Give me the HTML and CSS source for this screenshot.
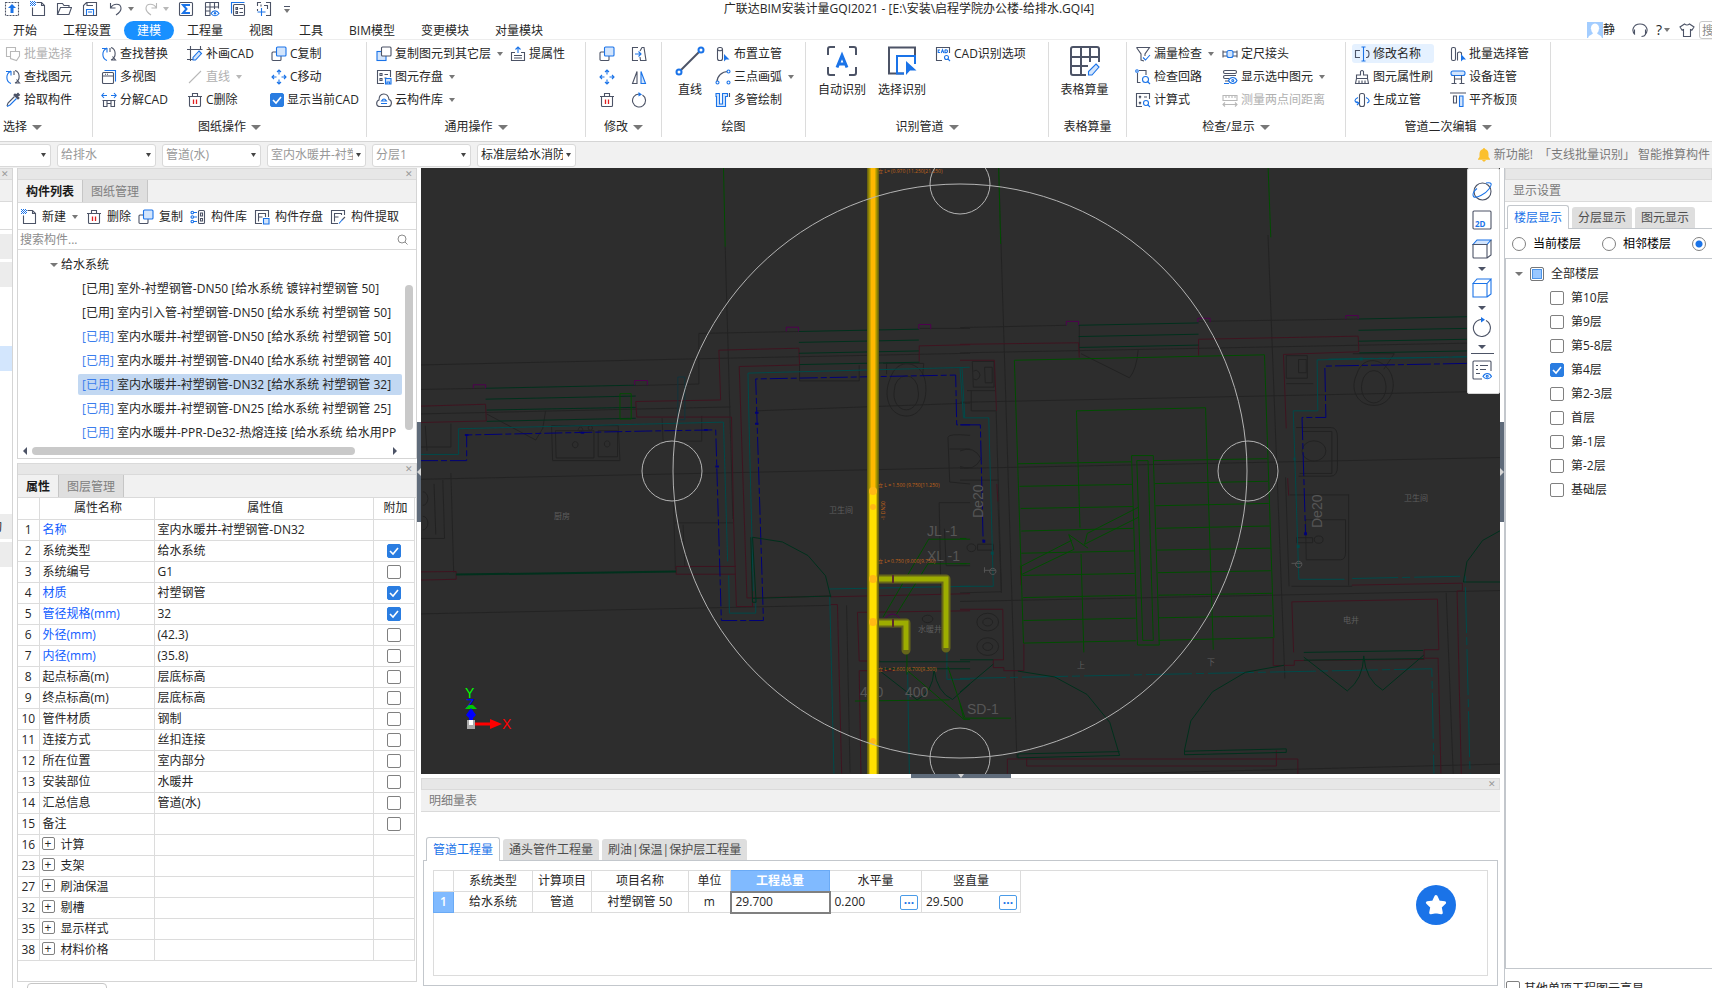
FILE: index.html
```html
<!DOCTYPE html>
<html lang="zh-CN">
<head>
  <meta charset="UTF-8" />
  <meta name="viewport" content="width=device-width, initial-scale=1.0"/>
  <title>广联达BIM安装计量GQI2021</title>
  <link rel="stylesheet" href="styles.css">
</head>
<body>
  <!-- Icon sprite: k = dark line, b = blue line, f = light blue fill -->
  <svg class="sprite" aria-hidden="true">
    <symbol id="i-top" viewBox="0 0 16 16"><path class="k" stroke-dasharray="2 1" d="M1.5 1.5h13v13h-13z"/><path class="bf" d="M8 3l4 4H9.5v5h-3V7H4z"/></symbol>
    <symbol id="i-new" viewBox="0 0 16 16"><path class="k" d="M6.500 1.500h5l3 3v10h-12v-8M11.500 1.500v3h3"/><path class="b" stroke-dasharray="1 1" d="M0 .5h5M1 1.500h5M0 2.500h5M1 3.500h5M0 4.500h5"/></symbol>
    <symbol id="i-open" viewBox="0 0 16 16"><path class="k" d="M1.500 13.500v-11h5l1.500 2h5v2M1.500 13.500l3-7h11l-2.500 7z"/></symbol>
    <symbol id="i-save" viewBox="0 0 16 16"><path class="k" d="M1.500 14.500v-10l3-3h10v13zM5 1.500v3h6"/><path class="b" d="M4.500 14v-5.500h7V14M6 11h4"/></symbol>
    <symbol id="i-undo" viewBox="0 0 16 16"><path class="k" d="M2.500 2v5h5M2.500 7c3-5 10-5 10.500 0 .3 3-2 5-5 7"/></symbol>
    <symbol id="i-redo" viewBox="0 0 16 16"><path class="g" d="M13.500 2v5h-5M13.500 7C10.500 2 3.500 2 3 7c-.3 3 2 5 5 7"/></symbol>
    <symbol id="i-sum" viewBox="0 0 16 16"><rect class="k" x="1.500" y="1.500" width="13" height="13" rx="1"/><path class="b w" d="M11 5V4H5l3.500 4L5 12h6v-1"/></symbol>
    <symbol id="i-grid" viewBox="0 0 16 16"><path class="k" d="M1.500 1.500h13v6M1.500 1.500v13h5M1.500 6h13M1.500 10h5M6 1.500v13M10.500 1.500V8"/><path class="b" d="M7 12.500c2-3.500 6-3.500 8 0-2 3-6 3-8 0z"/><circle class="bf" cx="11" cy="12.300" r="1.200"/></symbol>
    <symbol id="i-list" viewBox="0 0 16 16"><path class="b" d="M1.500 12.500v-11h13"/><rect class="k" x="3.500" y="3.500" width="11" height="11" rx="1"/><path class="k" d="M6 6.500h1.500v2H6zM6 10.500h1.500v2H6zM9.500 7.500H13M9.500 11.500H13"/></symbol>
    <symbol id="i-addpage" viewBox="0 0 16 16"><path class="k" d="M1.500 5V1.500H5M10 1.500h4.500V14.500H10M5 5.500v-2M8 4.500h3.500V8M1.500 8v2"/><path class="b" d="M5.500 7v8M1.500 11h8"/></symbol>
    <symbol id="i-batch" viewBox="0 0 16 16"><path class="g" d="M5 10.500H1.500v-9h9V5"/><path class="g" d="M5.500 5.500h9V10l-3 4.500-6-2z"/></symbol>
    <symbol id="i-find" viewBox="0 0 16 16"><path class="b" stroke-width="1.400" d="M6 14.500C1 13 0 5 6 2M1 2.500h5v4"/><path class="k" stroke-width="1.400" d="M10 1.500c5 1.500 6 9.500 0 12.500M10 14l4.500 0-3-3.500M9 2v4"/></symbol>
    <symbol id="i-pick" viewBox="0 0 16 16"><path class="k kf" d="M9 3l4 4 1-1-1.500-1.500L14.500 3 13 1.200 11.200 3 10 2z"/><path class="k" d="M9.500 4.500L3 11l-1 3"/><path class="b" d="M11.500 6.500L5 13l-3 1.500"/></symbol>
    <symbol id="i-views" viewBox="0 0 16 16"><path class="b" d="M3.500 1.500h11v11"/><rect class="k" x="1.500" y="3.500" width="11" height="11" rx="1"/><path class="k" d="M1.500 7h11M4 5.300h1M6 5.300h1"/></symbol>
    <symbol id="i-split" viewBox="0 0 16 16"><path class="b" d="M1 3.500h5M3 1L.8 3.500 3 6M15 3.500h-5M13 1l2.200 2.500L13 6"/><path class="k" d="M1.500 8.500h13M2.500 8.500v6h3.500v-6M10 8.500v6h3.500v-6M6 11.500h4"/></symbol>
    <symbol id="i-drawcad" viewBox="0 0 16 16"><path class="k" d="M0 3.500h15.500M3.500 0v15M0 13.500h7M13.500 0v3"/><path class="b f" d="M12 5l2.500 2.500-6 6.500H6v-2.500z"/></symbol>
    <symbol id="i-gline" viewBox="0 0 16 16"><path class="g" d="M2 14L14 2"/></symbol>
    <symbol id="i-trash" viewBox="0 0 16 16"><path class="k" d="M1 4.500h14M5.500 4V1.500h5V4M2.500 4.500v9q0 1 1 1h9q1 0 1-1v-9"/><path class="r" d="M6.500 7.500v4.500M9.500 7.500v4.500"/></symbol>
    <symbol id="i-copy" viewBox="0 0 16 16"><rect class="k" x="1" y="6" width="9" height="8.500" rx="1"/><rect class="b f" x="5.500" y="1" width="9.500" height="9" rx="1"/></symbol>
    <symbol id="i-copy2" viewBox="0 0 16 16"><rect class="b f" x="1" y="5.500" width="9" height="9"/><rect class="k wf" x="5.500" y="1" width="9.500" height="9" rx="1"/></symbol>
    <symbol id="i-move" viewBox="0 0 16 16"><path class="b" stroke-width="1.300" d="M8 1v4.500M8 15v-4.500M1 8h4.500M15 8h-4.500M6 3l2-2 2 2M6 13l2 2 2-2M3 6L1 8l2 2M13 6l2 2-2 2"/></symbol>
    <symbol id="i-store" viewBox="0 0 16 16"><path class="k" d="M8 14.500H1.500v-13h13V8M4 4.500h2v2H4zM4 9.500h2v2H4zM8.500 5.500H12M8.500 9h2"/><path class="b f" d="M9.500 9.500h5.500v5.500H9.500zM11 15v-2h2.500v2"/></symbol>
    <symbol id="i-cloud" viewBox="0 0 16 16"><path class="k" d="M4 14.500C-.5 14.500 0 9 3 8 3 0 12 0 13 7.500c3.500 1 3 7-.5 7z"/><path class="b" d="M5 11.500h6M5.500 9q2.500-4 5 0z"/></symbol>
    <symbol id="i-attr" viewBox="0 0 16 16"><path class="b" d="M8 7V1M5.500 3.500L8 1l2.500 2.500"/><path class="k" d="M5 6.500H1.500v8h13v-8H11M4 9.500h8M4 12h8"/></symbol>
    <symbol id="i-offset" viewBox="0 0 16 16"><path class="k" d="M7 1.500H1.500v13H7M9 5l2-3.500h2l2 13H9.500L9 11"/><path class="b" d="M4 8h6M7.500 5.500L10 8l-2.500 2.500"/></symbol>
    <symbol id="i-mirror" viewBox="0 0 16 16"><path class="k" d="M6 2.500v12H1.500z"/><path class="b f" d="M10 2.500v12h4.500z"/></symbol>
    <symbol id="i-rotate" viewBox="0 0 16 16"><path class="k" d="M11.500 3A6.500 6.500 0 1 1 8 2"/><path class="bf" d="M7.500 0v4.500l3.500-2z"/></symbol>
    <symbol id="i-line" viewBox="0 0 30 30"><path class="k w" d="M5 25L25 5"/><circle class="b wf w" cx="4" cy="26" r="2.500"/><circle class="b wf w" cx="26" cy="4" r="2.500"/></symbol>
    <symbol id="i-riser" viewBox="0 0 16 16"><rect class="k" x="2.500" y="1.500" width="5" height="13" rx="2"/><path class="k" d="M3 4q2 1.500 4 0"/><path class="bf" d="M9 8v7.500l2-2h3.500z"/></symbol>
    <symbol id="i-arc" viewBox="0 0 16 16"><path class="k" d="M2 13C2 7 7 2.500 13 2.500"/><circle class="b wf" cx="2.500" cy="13.500" r="1.500"/><circle class="b wf" cx="13.500" cy="2.500" r="1.500"/><circle class="b wf" cx="13.500" cy="13.500" r="1.500"/></symbol>
    <symbol id="i-multi" viewBox="0 0 16 16"><path class="b f" stroke-width="1.300" d="M1 1.500h3.500v10.500h3v-10.500h5v3h-2v10h-9V4.500H1z"/><path class="k" d="M14.500 1v4"/></symbol>
    <symbol id="i-auto" viewBox="0 0 30 30"><path class="k w" d="M1 9V3q0-2 2-2h5M22 1h5q2 0 2 2v6M29 21v6q0 2-2 2h-5M8 29H3q-2 0-2-2v-6"/><path class="b t" d="M10 21.500L15 9.500l5 12M12 18h6"/></symbol>
    <symbol id="i-sel" viewBox="0 0 30 30"><path class="k w" d="M17 27.500H2V1.500h26V10"/><path class="b w" d="M17 27.500H10V10h18v8"/><path class="bf" d="M19 15v14l4-4.500h6.500z"/></symbol>
    <symbol id="i-cad" viewBox="0 0 16 16"><path class="k" d="M7 14.500H1.500v-13h13V7"/><path class="b" d="M5 4H3.200v2.500H5M6.200 7L7.500 3.800 8.800 7M10 3.800v2.900q2.500 0 2.500-1.500T10 3.800"/><circle class="b" cx="11.500" cy="11.500" r="2"/><path class="b" d="M13 13l2 2"/></symbol>
    <symbol id="i-table" viewBox="0 0 30 30"><path class="k w" d="M16 29H3q-2 0-2-2V3q0-2 2-2h24q2 0 2 2v13M1 11h28M1 20h17M11 1v28M20 1v15"/><path class="b f" d="M26 18l3 3-7 8h-3.500v-3.500z"/></symbol>
    <symbol id="i-funnel" viewBox="0 0 16 16"><path class="k" d="M1.500 1.500h13L10 8v2M1.500 1.500L6 8v6l3 1"/><path class="b" d="M8 11.500l2.500 2.500L15 9"/></symbol>
    <symbol id="i-loop" viewBox="0 0 16 16"><path class="k" d="M2.500 4v9.500h3M4 1.500h7V6"/><circle class="b" cx="2" cy="2" r="1.300"/><circle class="b" cx="10.500" cy="10.500" r="3"/><path class="b" d="M12.500 12.500L15 15"/></symbol>
    <symbol id="i-calc" viewBox="0 0 16 16"><path class="k" d="M7 14.500H1.500v-13h13V7M4 4l2 2M6 4L4 6M4 10l2 2M6 10l-2 2M9 5h3"/><circle class="b" cx="11" cy="11" r="2.500"/><path class="b" d="M12.500 12.500L15 15"/></symbol>
    <symbol id="i-joint" viewBox="0 0 16 16"><path class="k" d="M1 4.500v7M15 4.500v7M1 6h4M1 10h4M11 6h4M11 10h4"/><rect class="b f" x="5" y="4.500" width="6" height="7" rx="2"/></symbol>
    <symbol id="i-layers" viewBox="0 0 16 16"><rect class="k" x="1.500" y="1.500" width="13" height="3" rx="1.500"/><path class="k" d="M14 6.500H3q-1.500 0-1.500 1.500T3 9.500h4M7 12H3"/><path class="b" d="M2 14.500h5M6.500 11.500c2-4 6.500-4 8.500 0-2 4-6.500 4-8.500 0z"/><circle class="b" cx="10.800" cy="11.500" r="1"/></symbol>
    <symbol id="i-ruler" viewBox="0 0 16 16"><path class="g" d="M1 3.500h14v5H1zM4 3.500V6M7 3.500V6M10 3.500V6M13 3.500V6M1 12.500h14M3 10.500l-2 2 2 2M13 10.500l2 2-2 2"/></symbol>
    <symbol id="i-rename" viewBox="0 0 16 16"><path class="k" d="M6 4.500H1.500v7H6M12 4.500h1q2 0 2 3.500t-2 3.500h-1"/><path class="b" stroke-width="1.300" d="M9.500 1v14M7.500 1h4M7.500 15h4"/></symbol>
    <symbol id="i-brush" viewBox="0 0 16 16"><path class="k" d="M6.500 6V2.500q1.500-2 3 0V6h4v3.500h-11V6zM2.500 9.500L1.500 14.500h13l-1-5M5 14v-2.500M8 14v-2.500M11 14v-2.500"/></symbol>
    <symbol id="i-gen" viewBox="0 0 16 16"><rect class="k" x="5.500" y="1.500" width="5" height="13" rx="2"/><path class="b" d="M4 5.500C-1 8 1 11 5 11M2.500 9.500L5 11l-2 2M12 5.500c4 2 4 4.500 1 5.500"/></symbol>
    <symbol id="i-pipes" viewBox="0 0 16 16"><rect class="k" x="1.500" y="1.500" width="4" height="13" rx="1.500"/><path class="k" d="M7.500 14.500V7q2-2 4 0v2"/><path class="bf" d="M11 8v7.500l2-2h3z"/></symbol>
    <symbol id="i-equip" viewBox="0 0 16 16"><rect class="b f" x="1" y="2" width="14" height="4.500" rx="2"/><path class="k" d="M4.500 6.500v8M11.500 6.500v8M1.500 14.500h5M9.500 14.500h5M4.500 10h7"/></symbol>
    <symbol id="i-align" viewBox="0 0 16 16"><path class="k" d="M0 1h16M3.500 4h3v7h-3z"/><path class="b f" d="M9.500 4H13v10.500H9.500z"/></symbol>
    <symbol id="i-lib" viewBox="0 0 16 16"><path class="b" d="M4 3.500h3M4 8h3M4 12.500h3"/><circle class="b" cx="2.300" cy="3.500" r="1.300"/><circle class="b" cx="2.300" cy="8" r="1.300"/><circle class="b" cx="2.300" cy="12.500" r="1.300"/><rect class="k" x="8.500" y="1.500" width="6" height="13" rx="1"/><path class="k" d="M10.500 4h2v3h-2zM10.500 9.500h2v2.500h-2z"/></symbol>
    <symbol id="i-hsave" viewBox="0 0 16 16"><path class="k" d="M8 14.500H1.500v-13h13V8M4.500 12.500v-8h7V8M4.500 8h4"/><path class="b f" d="M9.500 9.500h5.500v5.500H9.500z"/></symbol>
    <symbol id="i-hpick" viewBox="0 0 16 16"><path class="k" d="M8 14.500H1.500v-13h13V6M4.500 12.500v-8h7V6M4.500 8h4M15 8l-3 3"/><path class="b" d="M12.500 10.500L9 14.500"/></symbol>
    <symbol id="i-headset" viewBox="0 0 16 16"><path class="k" stroke-width="1.300" d="M3 12.500C-1 9 1 2 8 2s9 7 5 10.500M2.500 7.500v5M13.500 7.500v5q-1 2-4 2"/></symbol>
    <symbol id="i-shirt" viewBox="0 0 16 16"><path class="k" d="M5.500 2L1 5l2 3 1.500-.5v7h7v-7L13 8l2-3-4.500-3q-2.500 2-5 0z"/></symbol>
    <symbol id="i-orbit" viewBox="0 0 20 20"><circle class="k" cx="10.500" cy="10.500" r="8.500"/><path class="b" d="M14 2c6-1 6.500 1 3 6S4 18 1.500 15.500C-.5 12 5 7.500 5 7.500"/></symbol>
    <symbol id="i-2d" viewBox="0 0 20 20"><rect class="k" x="1" y="1" width="18" height="18" rx="1"/></symbol>
    <symbol id="i-cubetop" viewBox="0 0 20 20"><path class="b f" d="M1 5.500L5 1h14l-4 4.500z"/><path class="k" d="M1 5.500h14V19H2q-1 0-1-1zM15 19l4-3V1"/></symbol>
    <symbol id="i-cube" viewBox="0 0 20 20"><path class="b" d="M1 5.500L5 1h14l-4 4.500zM1 5.500V19h14V5.500M15 19l4-3V1"/></symbol>
    <symbol id="i-rot" viewBox="0 0 20 20"><path class="k" d="M14 3.500A8.500 8.500 0 1 1 9 2.500"/><path class="bf" d="M9 0v5.500l4-2.700z"/></symbol>
    <symbol id="i-show" viewBox="0 0 20 20"><path class="k" d="M10 19H2q-1 0-1-1V2q0-1 1-1h16q1 0 1 1v9M4 5.500h2M8 5.500h8M4 9.500h2M8 9.500h6M4 13.500h4"/><path class="b" d="M11 16.500c2-4 6.500-4 8.500 0-2 3-6.500 3-8.500 0z"/><circle class="b" cx="15.200" cy="16.300" r="1"/></symbol>
  </svg>

  <header class="titlebar">
    <div class="quick">
      <button aria-label="置顶"><svg class="ic"><use href="#i-top"/></svg></button>
      <button aria-label="新建"><svg class="ic"><use href="#i-new"/></svg></button>
      <button aria-label="打开"><svg class="ic"><use href="#i-open"/></svg></button>
      <button aria-label="保存"><svg class="ic"><use href="#i-save"/></svg></button>
      <button class="with-caret" aria-label="撤销"><svg class="ic"><use href="#i-undo"/></svg><i class="caret"></i></button>
      <button class="with-caret off" aria-label="恢复"><svg class="ic"><use href="#i-redo"/></svg><i class="caret"></i></button>
      <button aria-label="汇总"><svg class="ic"><use href="#i-sum"/></svg></button>
      <button aria-label="查看表格"><svg class="ic"><use href="#i-grid"/></svg></button>
      <button aria-label="清单"><svg class="ic"><use href="#i-list"/></svg></button>
      <button aria-label="添加"><svg class="ic"><use href="#i-addpage"/></svg></button>
      <button class="more" aria-label="更多"><i class="caret"></i></button>
    </div>
    <h1>广联达BIM安装计量GQI2021 - [E:\安装\启程学院办公楼-给排水.GQI4]</h1>
  </header>

  <nav class="menubar">
    <button>开始</button>
    <button>工程设置</button>
    <button class="active">建模</button>
    <button>工程量</button>
    <button>视图</button>
    <button>工具</button>
    <button>BIM模型</button>
    <button>变更模块</button>
    <button>对量模块</button>
    <div class="user">
      <svg class="avatar" viewBox="0 0 16 16"><rect width="16" height="16" fill="#a3cdff"/><path fill="#fff" d="M4 6q0-4 4-4.500Q12 2 12 6l.8.600H12q-.5 4-2 4.500 0 1 4 3l1 1.900H1l1-1.900q4-2 4-3-1.500-.5-2-4.500h-.8z"/></svg>
      <span>静</span>
      <svg class="ic headset"><use href="#i-headset"/></svg>
      <span class="help">?<i class="caret"></i></span>
      <svg class="ic shirt"><use href="#i-shirt"/></svg>
      <input type="text" placeholder="搜索" aria-label="搜索功能">
    </div>
  </nav>

  <section class="ribbon">
    <div class="group g-select">
      <div class="cols"><div class="col">
        <button class="tool off"><svg class="ic"><use href="#i-batch"/></svg>批量选择</button>
        <button class="tool"><svg class="ic"><use href="#i-find"/></svg>查找图元</button>
        <button class="tool"><svg class="ic"><use href="#i-pick"/></svg>拾取构件</button>
      </div></div>
      <div class="caption">选择<i class="caret big"></i></div>
    </div>
    <div class="group g-sheet">
      <div class="cols">
        <div class="col">
          <button class="tool"><svg class="ic"><use href="#i-find"/></svg>查找替换</button>
          <button class="tool"><svg class="ic"><use href="#i-views"/></svg>多视图</button>
          <button class="tool"><svg class="ic"><use href="#i-split"/></svg>分解CAD</button>
        </div>
        <div class="col">
          <button class="tool"><svg class="ic"><use href="#i-drawcad"/></svg>补画CAD</button>
          <button class="tool off"><svg class="ic"><use href="#i-gline"/></svg>直线<i class="caret"></i></button>
          <button class="tool"><svg class="ic"><use href="#i-trash"/></svg>C删除</button>
        </div>
        <div class="col">
          <button class="tool"><svg class="ic"><use href="#i-copy"/></svg>C复制</button>
          <button class="tool"><svg class="ic"><use href="#i-move"/></svg>C移动</button>
          <label class="tool check"><input type="checkbox" checked>显示当前CAD</label>
        </div>
      </div>
      <div class="caption">图纸操作<i class="caret big"></i></div>
    </div>
    <div class="group g-common">
      <div class="cols">
        <div class="col">
          <button class="tool"><svg class="ic"><use href="#i-copy2"/></svg>复制图元到其它层<i class="caret"></i></button>
          <button class="tool"><svg class="ic"><use href="#i-store"/></svg>图元存盘<i class="caret"></i></button>
          <button class="tool"><svg class="ic"><use href="#i-cloud"/></svg>云构件库<i class="caret"></i></button>
        </div>
        <div class="col">
          <button class="tool"><svg class="ic"><use href="#i-attr"/></svg>提属性</button>
        </div>
      </div>
      <div class="caption">通用操作<i class="caret big"></i></div>
    </div>
    <div class="group g-edit">
      <div class="cols">
        <div class="col">
          <button class="tool" aria-label="复制"><svg class="ic"><use href="#i-copy"/></svg></button>
          <button class="tool" aria-label="移动"><svg class="ic"><use href="#i-move"/></svg></button>
          <button class="tool" aria-label="删除"><svg class="ic"><use href="#i-trash"/></svg></button>
        </div>
        <div class="col">
          <button class="tool" aria-label="偏移"><svg class="ic"><use href="#i-offset"/></svg></button>
          <button class="tool" aria-label="镜像"><svg class="ic"><use href="#i-mirror"/></svg></button>
          <button class="tool" aria-label="旋转"><svg class="ic"><use href="#i-rotate"/></svg></button>
        </div>
      </div>
      <div class="caption">修改<i class="caret big"></i></div>
    </div>
    <div class="group g-draw">
      <div class="cols">
        <button class="bigtool"><svg><use href="#i-line"/></svg>直线</button>
        <div class="col">
          <button class="tool"><svg class="ic"><use href="#i-riser"/></svg>布置立管</button>
          <button class="tool"><svg class="ic"><use href="#i-arc"/></svg>三点画弧<i class="caret"></i></button>
          <button class="tool"><svg class="ic"><use href="#i-multi"/></svg>多管绘制</button>
        </div>
      </div>
      <div class="caption">绘图</div>
    </div>
    <div class="group g-detect">
      <div class="cols">
        <button class="bigtool"><svg><use href="#i-auto"/></svg>自动识别</button>
        <button class="bigtool"><svg><use href="#i-sel"/></svg>选择识别</button>
        <div class="col">
          <button class="tool"><svg class="ic"><use href="#i-cad"/></svg>CAD识别选项</button>
        </div>
      </div>
      <div class="caption">识别管道<i class="caret big"></i></div>
    </div>
    <div class="group g-table">
      <div class="cols">
        <button class="bigtool"><svg><use href="#i-table"/></svg>表格算量</button>
      </div>
      <div class="caption">表格算量</div>
    </div>
    <div class="group g-check">
      <div class="cols">
        <div class="col">
          <button class="tool"><svg class="ic"><use href="#i-funnel"/></svg>漏量检查<i class="caret"></i></button>
          <button class="tool"><svg class="ic"><use href="#i-loop"/></svg>检查回路</button>
          <button class="tool"><svg class="ic"><use href="#i-calc"/></svg>计算式</button>
        </div>
        <div class="col">
          <button class="tool"><svg class="ic"><use href="#i-joint"/></svg>定尺接头</button>
          <button class="tool"><svg class="ic"><use href="#i-layers"/></svg>显示选中图元<i class="caret"></i></button>
          <button class="tool off"><svg class="ic"><use href="#i-ruler"/></svg>测量两点间距离</button>
        </div>
      </div>
      <div class="caption">检查/显示<i class="caret big"></i></div>
    </div>
    <div class="group g-pipe">
      <div class="cols">
        <div class="col">
          <button class="tool hover"><svg class="ic"><use href="#i-rename"/></svg>修改名称</button>
          <button class="tool"><svg class="ic"><use href="#i-brush"/></svg>图元属性刷</button>
          <button class="tool"><svg class="ic"><use href="#i-gen"/></svg>生成立管</button>
        </div>
        <div class="col">
          <button class="tool"><svg class="ic"><use href="#i-pipes"/></svg>批量选择管</button>
          <button class="tool"><svg class="ic"><use href="#i-equip"/></svg>设备连管</button>
          <button class="tool"><svg class="ic"><use href="#i-align"/></svg>平齐板顶</button>
        </div>
      </div>
      <div class="caption">管道二次编辑<i class="caret big"></i></div>
    </div>
  </section>

  <section class="filterbar">
    <select class="cut" aria-label="楼层"><option></option></select>
    <select aria-label="专业"><option>给排水</option></select>
    <select aria-label="构件类型"><option>管道(水)</option></select>
    <select aria-label="构件"><option>室内水暖井-衬塑钢管-DN32</option></select>
    <select aria-label="分层"><option>分层1</option></select>
    <select class="strong" aria-label="图纸"><option>标准层给水消防平面图</option></select>
    <a class="notice" href="#">
      <svg viewBox="0 0 12 14"><path fill="#fbc02d" d="M6 0q1 0 1 1 3.500 1 3.500 5v3L12 11v.8H0V11l1.500-2V6Q1.500 2 5 1q0-1 1-1zM4 12h4q-2 3.500-4 0z"/></svg>
      <span>新功能!</span><span>「支线批量识别」 智能推算构件</span>
    </a>
  </section>

  <main class="workspace">
    <aside class="strip">
      <div class="dock-head"><button class="close" aria-label="关闭">✕</button></div>
      <div class="strip-title"></div>
      <div class="strip-tools"></div>
      <div class="tile"></div>
      <div class="tile"></div>
      <div class="tile current"></div>
      <div class="tile text">构</div>
      <div class="tile"></div>
    </aside>

    <div class="left">
      <section class="panel components">
        <div class="dock-head"><button class="close" aria-label="关闭">✕</button></div>
        <div class="dock-tabs">
          <button class="active">构件列表</button><button>图纸管理</button>
        </div>
        <div class="toolbar">
          <button><svg class="ic"><use href="#i-new"/></svg>新建<i class="caret"></i></button>
          <button><svg class="ic"><use href="#i-trash"/></svg>删除</button>
          <button><svg class="ic"><use href="#i-copy"/></svg>复制</button>
          <button><svg class="ic"><use href="#i-lib"/></svg>构件库</button>
          <button><svg class="ic"><use href="#i-hsave"/></svg>构件存盘</button>
          <button><svg class="ic"><use href="#i-hpick"/></svg>构件提取</button>
        </div>
        <div class="search">
          <input type="text" placeholder="搜索构件..." aria-label="搜索构件">
          <svg viewBox="0 0 12 12"><circle cx="5" cy="5" r="4"/><path d="M8 8l2.500 2.500"/></svg>
        </div>
        <div class="tree">
          <div class="tree-body">
            <div class="node"><i class="caret big"></i>给水系统</div>
            <ul id="components"></ul>
            <div class="vscroll"></div>
          </div>
          <div class="hscroll"><i class="arrow-l"></i><div class="thumb"></div><i class="arrow-r"></i></div>
        </div>
      </section>

      <section class="panel props">
        <div class="dock-head"><button class="close" aria-label="关闭">✕</button></div>
        <div class="dock-tabs">
          <button class="active">属性</button><button>图层管理</button>
        </div>
        <table class="prop-table">
          <colgroup><col class="c-no"><col class="c-name"><col><col class="c-add"></colgroup>
          <thead><tr><th></th><th>属性名称</th><th>属性值</th><th>附加</th></tr></thead>
          <tbody id="props"></tbody>
        </table>
      </section>
      <div class="stub"><button aria-label="展开"></button></div>
    </div>

    <div class="gutter"><button class="grip" aria-label="收起左侧"><i class="arrow-l"></i></button></div>

    <div class="center">
      <section class="viewport">
        <svg class="drawing" viewBox="421 168 1079 606" preserveAspectRatio="xMidYMid slice">
          <!-- left half of the plan -->
          <g class="plan" transform="translate(420 165) scale(.3508 .389)">
            <path class="wall" d="M0 514L853 497 1568 484M0 577l187-3M0 808l1568-30M0 1154l1170-22M870 210l22 700M88 792l8 255M0 640l885-18M795 433v130l-180 4M795 433l285-5M727 920h165M720 780l8 260M750 925l5 105M690 650l3 60h110v-65M958 632l610-20M1425 420h143M1216 1132l10 430M1480 868h88M1480 868l5 235M65 810l5 150H0M0 725h88v-60M15 670l5 65"/>
            <path class="fixture" d="M375 670h190l5 90H378zM386 683h110v70H388zM508 683h55v67h-55zM442 711a8 8 0 1 0 1 0M533 709a8 8 0 1 0 1 0M485 670a6 6 0 1 0 1 0M457 674a6 6 0 1 0 1 0M190 640l140 67 20-30 8-45M40 820l5 130M8 840a14 17 0 0 1 0 35M8 903a14 17 0 0 1 0 35M1320 510h116l-3 30M1082 515v40h170v-40M1340 550c-20 40-5 90 40 95s70-40 60-90-80-65-100-5zM1352 580a35 40 0 1 0 68 0 34 38 0 0 0-68 0M1505 700q0-10 63-5M1505 700l5 115 58 5M1510 730h58M1495 935l5 95h68M1330 508v30M1432 1167a14 9 0 1 0 30 0 14 9 0 0 0-30 0"/>
            <path class="red" d="M0 620l187-5 2 43L0 662M615 608l242-4-5-128 228-5 2 43-172 4 22 595 240-5M615 608l3 40h270l6 270 8 217h46l-3-90M0 1046l103-1v20L0 1067M730 1032h170M730 1032v20h170M1423 465l145-3M1423 465v40M1170 1110l398-8M1170 1130h20l12 434M1247 1150l321-4M1247 1150l5 125h60M1252 1300h100M1252 1300l5 265"/>
            <path class="cyan" d="M0 744h110V678l755-17 12 358M880 1055l2 97h75v-40M935 535l632-15M935 535l3 130 12 430M1545 522l8 128M1165 1090l403-7M1168 1110l12 455M1390 1300l5 265"/>
            <path class="cyan" d="M1502 1250v72h66"/>
            <path class="navy" stroke-dasharray="18 3 6 3" d="M0 760h133V694l510-10 200-3 16 490h120L957 550l570-10 3 128h38"/>
            <path class="navy" stroke-width="2" d="M128 694h10M458 688h10M810 681h10M955 637h10M842 775h10M955 665h10"/>
            <path class="dgreen" d="M187 574l428-8M187 602l428-8M190 630l425-7M190 659l425-8M1080 428l342-6M1080 456l342-6M1080 484l342-6M1082 513l342-6M943 957l5 167h10l-10-167 85 12 73 35 50 52 15 55M948 1114l224-6M1310 1277h258M1310 1295h258M1310 1300l107 75q45-20 48-75M1465 1297q10 60 53 77l50-40"/>
            <path class="dgreen" stroke-width="2" d="M103 1053l627-8"/>
            <path class="green" d="M865 0l5 210M570 588h32v65h-32zM1568 962h-118l-130 200M1568 1025h-120l-90 130M1240 1378l270-3M1390 1300l160 125h18M1505 1290l48 130M1388 1250v60"/>
            <path class="mag" d="M152 574v-9h35v9M612 566v-12h36v12M1044 428v-11h35v11M1422 422v-12h34v12M1323 1168q25-28 47 0-22 25-47 0z"/>
            <path class="teal" d="M735 545h20v110h-20z"/>
          </g>
          <!-- right half of the plan -->
          <g class="plan" transform="translate(960 165) scale(.3508 .389)">
            <path class="wall" d="M110 0l52 1525M0 418l303-6M0 483l1445-25M0 610l1445-27M0 780l1540-28M0 1122l1540-28M340 412l0 70M680 402l455-6M878 180l48 1140M0 1100l118-3-15-465M1386 1100l20 465M0 1575l1540-35M108 860l10 240M938 1083l-10-280M945 1083h173M1108 846v235M940 848h168M0 810h110"/>
            <path class="fixture" d="M35 505l62 0v66H38zM70 520h22v40H72zM38 530a12 12 0 1 1 0 20M20 580h80M32 580v52h70M0 735q40-15 60 20-20 35-60 20M20 984a10 8 0 1 0 25 0 10 8 0 0 0-25 0M50 975h45v15H50zM48 1175a30 22 0 1 0 62 0 30 22 0 0 0-62 0M65 1175a14 10 0 1 0 28 0 14 10 0 0 0-28 0M48 1238a30 22 0 1 0 62 0 30 22 0 0 0-62 0M65 1238a14 10 0 1 0 28 0 14 10 0 0 0-28 0M930 490h60v58h-60zM965 500h22v34h-22zM1120 485h118l-30 40M1130 540c-20 40 5 78 50 78s65-40 50-78-80-60-100 0zM1146 560a35 40 0 1 0 67 0 34 38 0 0 0-67 0M958 675h100q18 0 18 25v75q0 25-20 25H965M975 685h85v108H968M975 735a34 26 0 1 0 68 0 34 26 0 0 0-68 0M985 912h114v85q0 18-15 18H987zM960 958h45v13h-45zM1010 963a12 9 0 1 0 25 0 12 9 0 0 0-25 0M345 485l138 62q20-20 25-72M930 562h77"/>
            <path class="red" d="M0 461l338-4 2 38M680 490v-42l455-8 2 40-215 7 8 190M0 502h98l6 130M0 1142h122l2 130H95v20h30v8h57V1230M105 820l3 45M893 1215v72l60-1v-12l370-3v-25h42l-4-130-415 7 5 130M934 805l3 45M1117 1080l315-5v20h-15l12 470M1325 1268h38l8 296M135 1565v-38h828v40M190 1525v20h712v-40M172 1030l2 50"/>
            <path class="cyan" stroke-dasharray="46 4 8 4" d="M0 1320l1345-25 6 270M1118 1063l322-6 14 508M1050 499l395-6"/>
            <path class="cyan" d="M0 522l10 128h72l13 433H0M1445 493l-427 8 2 131h-70l16 433h130"/>
            <path class="navy" stroke-dasharray="24 3 6 3" d="M0 668h58l8 300M1445 510l-405 7 3 132h-68l10 300"/>
            <path class="navy" stroke-width="3" d="M64 967h8M981 948h8"/>
            <path class="cyan" stroke-width="3" d="M88 998h8M1139 499h9M960 981h8M951 756h5"/>
            <path class="dgreen" d="M338 412l342-6M338 441l342-6M340 469l340-6M1136 396l309-6M1136 425l309-5M1136 453l309-5M1138 483l307-5M165 1301l105 15 92 45 65 72 28 85-290 6v-10l290-6M924 1286l-110 18-94 50-62 75-18 75v12l290-6v-9l-290 6M980 1253l340-5M980 1273l342-4M980 1265l124 87q45-30 47-90 5 62 54 88l117-90M0 1272h95M0 1355l95-72M1540 940l-50 25-45 55-10 52h105"/>
            <path class="green" d="M110 0l6 203M878 0l8 186M155 502l713-14 27 727M155 502l26 727 320-6M332 632l368-8 22 622M332 632l10 300M345 1000l8 253M165 768l324-5M170 826l320-5M173 883l320-5M175 941l320-7M175 998l322-6M178 1055l320-5M180 1112l320-6M181 1171l320-6M553 760l323-5M555 819l323-6M557 876l323-6M560 934l323-6M562 990l323-5M564 1048l322-5M566 1106l323-5M566 1164l323-5M566 1222l327-7M489 747h62l17 487h-62zM504 760h32l15 462h-30zM508 880l-145 67-8 28 155-70M365 985l-55-35 15 38-150 65v-22l145-67M0 1385l10 37h135M0 960h18M0 1025h18"/>
            <path class="mag" d="M303 412v-10h35v10M678 404v-10h35v10M1100 396v-9h35v9"/>
            <path class="lite" d="M68 1042h34M70 1034v14M85 1042a9 8 0 1 0 17 0 9 8 0 0 0-17 0M945 1024h30M957 1024a9 8 0 1 0 17 0 9 8 0 0 0-17 0"/>
          </g>
          <g class="plan-text">
            <text x="927" y="536">JL -1</text>
            <text x="927" y="561">XL -1</text>
            <text x="860" y="697">400</text>
            <text x="905" y="697">400</text>
            <text x="967" y="714">SD-1</text>
            <text transform="translate(983 518) rotate(-90)">De20</text>
            <text transform="translate(1322 528) rotate(-90)">De20</text>
            <g class="tiny">
              <text x="554" y="519">厨房</text><text x="829" y="513">卫生间</text><text x="918" y="632">水暖井</text>
              <text x="1404" y="501">卫生间</text><text x="1343" y="623">电井</text><text x="1077" y="668">上</text><text x="1207" y="665">下</text>
            </g>
          </g>

          <!-- branch pipes -->
          <path class="branch-o" d="M876 579h70v69M876 623h30v27"/>
          <path class="branch-i" d="M876 579h70v69M876 623h30v27"/>
          <path d="M893 575v8M893 619v8" stroke="#5a2a30" stroke-width="2"/>
          <!-- selected riser -->
          <path d="M873 168v606" stroke="#6b6410" stroke-width="12"/>
          <path d="M873 168v606" stroke="#a89600" stroke-width="9"/>
          <path d="M873 168v325" stroke="#ffb900" stroke-width="5"/>
          <path d="M873 492v282" stroke="#ffdf00" stroke-width="7"/>
          <g fill="#ffb914"><circle cx="873" cy="491" r="4"/><circle cx="873" cy="507" r="3"/><circle cx="873" cy="579" r="4"/><circle cx="873" cy="622" r="4"/><circle cx="873" cy="741" r="3"/></g>
          <g class="pipe-text">
            <text x="878" y="173">立 L= (0.970 (11.250[21.250)</text>
            <text x="878" y="487">立 L = 1.500 (9.750[11.250)</text>
            <text x="878" y="563">立 L= 0.750 (9.000[9.750)</text>
            <text x="878" y="671">立 L = 2.600 (6.700[9.300)</text>
            <text transform="translate(885 520) rotate(-90)">-1 DN50</text>
          </g>
          <g class="orbit">
            <circle cx="960" cy="471" r="287"/>
            <circle cx="672" cy="471" r="30"/><circle cx="1248" cy="471" r="30"/>
            <circle cx="960" cy="184" r="30"/><circle cx="960" cy="758" r="30"/>
          </g>
          <g class="axis">
            <text x="465" y="698" fill="#00ff00">Y</text><text x="466" y="709" fill="#0000ff">Z</text>
            <path d="M465 709l4-4h4l4 4z" fill="#00c800"/>
            <path d="M471 708l5 7-3 3v5h-4v-5l-3-3z" fill="#0000ff"/>
            <path d="M475 722.500h15V719l12 5-12 5v-3.500h-15z" fill="#ff0000"/>
            <rect x="467" y="720" width="8" height="9" fill="#aaa"/><rect x="469" y="720" width="4" height="5" fill="#fff"/>
            <text x="502" y="729" fill="#ff0000">X</text>
          </g>
        </svg>
        <div class="viewtools">
          <button aria-label="动态观察"><svg><use href="#i-orbit"/></svg></button>
          <button class="two-d"><svg><use href="#i-2d"/></svg><span>2D</span></button>
          <button aria-label="俯视"><svg><use href="#i-cubetop"/></svg><i class="caret dark"></i></button>
          <button aria-label="线框"><svg><use href="#i-cube"/></svg><i class="caret dark"></i></button>
          <button aria-label="旋转视图"><svg><use href="#i-rot"/></svg><i class="caret dark"></i></button>
          <hr>
          <button aria-label="显示选项"><svg><use href="#i-show"/></svg></button>
        </div>
      </section>
      <div class="hgutter"><button class="grip" aria-label="收起下方"><i class="caret"></i></button></div>

      <section class="detail">
        <div class="dock-head"><button class="close" aria-label="关闭">✕</button></div>
        <h2 class="dock-title">明细量表</h2>
        <div class="tabs">
          <button class="active">管道工程量</button>
          <button>通头管件工程量</button>
          <button>刷油|保温|保护层工程量</button>
        </div>
        <div class="tabpage">
          <div class="sheet">
            <table class="qty">
              <colgroup><col class="q1"><col class="q2"><col class="q3"><col class="q4"><col class="q5"><col class="q6"><col class="q7"><col class="q8"></colgroup>
              <thead><tr><th></th><th>系统类型</th><th>计算项目</th><th>项目名称</th><th>单位</th><th class="sel">工程总量</th><th>水平量</th><th>竖直量</th></tr></thead>
              <tbody><tr>
                <td class="sel">1</td><td>给水系统</td><td>管道</td><td>衬塑钢管 50</td><td>m</td>
                <td class="num focus">29.700</td>
                <td class="num"><div>0.200<button aria-label="水平量明细">···</button></div></td>
                <td class="num"><div>29.500<button aria-label="竖直量明细">···</button></div></td>
              </tr></tbody>
            </table>
          </div>
          <button class="star" aria-label="收藏"><svg viewBox="0 0 40 40"><path d="M20 11.500l2.600 5.400 6 .8-4.400 4.200 1.100 5.900-5.300-1-5.300 1 1.100-5.900-4.400-4.200 6-.8z"/></svg></button>
        </div>
      </section>
    </div>

    <div class="gutter"><button class="grip" aria-label="收起右侧"><i class="arrow-r"></i></button></div>

    <aside class="display">
      <div class="dock-head"></div>
      <h2 class="dock-title">显示设置</h2>
      <div class="tabs">
        <button class="active">楼层显示</button>
        <button>分层显示</button>
        <button>图元显示</button>
      </div>
      <div class="radios">
        <label><input type="radio" name="scope">当前楼层</label>
        <label><input type="radio" name="scope">相邻楼层</label>
        <label><input type="radio" name="scope" checked>自定义</label>
      </div>
      <div class="floors">
        <div class="root"><i class="caret big"></i><label><input type="checkbox" class="partial">全部楼层</label></div>
        <ul id="floors"></ul>
      </div>
      <label class="others"><input type="checkbox">其他单项工程图元亮显</label>
    </aside>
  </main>

  <script>
    const components = [
      ['', '室外-衬塑钢管-DN50 [给水系统 镀锌衬塑钢管 50]'],
      ['', '室内引入管-衬塑钢管-DN50 [给水系统 衬塑钢管 50]'],
      ['used', '室内水暖井-衬塑钢管-DN50 [给水系统 衬塑钢管 50]'],
      ['used', '室内水暖井-衬塑钢管-DN40 [给水系统 衬塑钢管 40]'],
      ['used current', '室内水暖井-衬塑钢管-DN32 [给水系统 衬塑钢管 32]'],
      ['used', '室内水暖井-衬塑钢管-DN25 [给水系统 衬塑钢管 25]'],
      ['used', '室内水暖井-PPR-De32-热熔连接 [给水系统 给水用PP']
    ];
    document.getElementById('components').innerHTML = components.map(([cls, name]) =>
      `<li class="${cls}"><span>[已用]</span> ${name}</li>`).join('');

    // no, name, value, extra (1 checked, 0 unchecked, null none), blue name
    const props = [
      [1, '名称', '室内水暖井-衬塑钢管-DN32', null, true],
      [2, '系统类型', '给水系统', 1],
      [3, '系统编号', 'G1', 0],
      [4, '材质', '衬塑钢管', 1, true],
      [5, '管径规格(mm)', '32', 1, true],
      [6, '外径(mm)', '(42.3)', 0, true],
      [7, '内径(mm)', '(35.8)', 0, true],
      [8, '起点标高(m)', '层底标高', 0],
      [9, '终点标高(m)', '层底标高', 0],
      [10, '管件材质', '钢制', 0],
      [11, '连接方式', '丝扣连接', 0],
      [12, '所在位置', '室内部分', 0],
      [13, '安装部位', '水暖井', 0],
      [14, '汇总信息', '管道(水)', 0],
      [15, '备注', '', 0]
    ];
    const groups = [[16, '计算'], [23, '支架'], [27, '刷油保温'], [32, '剔槽'], [35, '显示样式'], [38, '材料价格']];

    document.getElementById('props').innerHTML =
      props.map(([no, name, value, extra, blue]) => `
        <tr>
          <td>${no}</td><td class="${blue ? 'blue' : ''}">${name}</td><td>${value}</td>
          <td>${extra === null ? '' : `<input type="checkbox" aria-label="${name}" ${extra ? 'checked' : ''}>`}</td>
        </tr>`).join('') +
      groups.map(([no, name]) => `
        <tr><td>${no}</td><td><button class="expand" aria-label="展开${name}">+</button>${name}</td><td></td><td></td></tr>`).join('');

    const floors = ['第10层', '第9层', '第5-8层', '第4层', '第2-3层', '首层', '第-1层', '第-2层', '基础层'];
    document.getElementById('floors').innerHTML = floors.map(f =>
      `<li><label><input type="checkbox" ${f === '第4层' ? 'checked' : ''}>${f}</label></li>`).join('');
  </script>
</body>
</html>
```
FILE: styles.css
```css
* {
  box-sizing: border-box;
}
body {
  margin: 0;
  height: 100vh;
  display: flex;
  flex-direction: column;
  overflow: hidden;
  background: #fff;
  color: #262626;
  font-family: "Open Sans", "Noto Sans CJK SC", sans-serif;
  font-size: 12px;
  line-height: 16px;
  white-space: nowrap;
}
button, input, select {
  font: inherit;
  color: inherit;
  padding: 0;
  margin: 0;
  border: none;
  background: none;
}
h1, h2 {
  margin: 0;
  font-size: 12px;
  font-weight: normal;
}
ul {
  list-style: none;
  margin: 0;
  padding: 0;
}

/* icons */
.sprite {
  position: absolute;
  width: 0;
  height: 0;
}
.ic {
  width: 16px;
  height: 16px;
  flex: none;
}
.k, .b, .r, .g { fill: none; stroke-width: 1.1; }
.k { stroke: #4c5366; }
.b { stroke: #1a73e8; }
.r { stroke: #e02020; stroke-width: 1.3; }
.g { stroke: #b8b8b8; }
.w { stroke-width: 2; }
.t { stroke-width: 3; }
.f { fill: #d3e5fc; }
.wf { fill: #fff; }
.bf { fill: #1a73e8; }
.kf { fill: #4c5366; }
.caret {
  display: block;
  flex: none;
  border: 3px solid transparent;
  border-top: 4px solid #777;
  border-bottom: 0;
}
.caret.big {
  border-width: 5px;
  border-top: 5px solid #777;
  border-bottom: 0;
}
.caret.dark {
  border-width: 4px;
  border-top: 4px solid #4c5366;
  border-bottom: 0;
}
.arrow-l, .arrow-r {
  border: 4px solid transparent;
}
.arrow-l {
  border-right-color: #4c5366;
  border-left: 0;
}
.arrow-r {
  border-left-color: #4c5366;
  border-right: 0;
}
input[type="checkbox"] {
  appearance: none;
  flex: none;
  width: 14px;
  height: 14px;
  border: 1px solid #808080;
  border-radius: 2px;
  background: #fff;
}
input[type="checkbox"]:checked {
  border-color: #2a7de1;
  background: #2a7de1 url("data:image/svg+xml,%3Csvg xmlns='http://www.w3.org/2000/svg' viewBox='0 0 12 12'%3E%3Cpath d='M2 6l3 3 5-6' fill='none' stroke='white' stroke-width='1.6'/%3E%3C/svg%3E") center / 12px no-repeat;
}
input[type="checkbox"].partial {
  background: #99c7ff;
  border-color: #777;
  box-shadow: inset 0 0 0 1px #fff, inset 0 0 0 2px #4d94e8;
}
input[type="radio"] {
  appearance: none;
  flex: none;
  width: 14px;
  height: 14px;
  border: 1px solid #808080;
  border-radius: 50%;
}
input[type="radio"]:checked {
  background: radial-gradient(#1a73e8 3px, #fff 4px);
}
::placeholder {
  color: #8c8c8c;
  opacity: 1;
}

/* title and menu */
.titlebar {
  display: flex;
  align-items: center;
  justify-content: center;
  height: 18px;
  flex: none;
  position: relative;
  padding-left: 106px;
}
.quick {
  position: absolute;
  left: 4px;
  top: 1px;
  display: flex;
  align-items: center;
  gap: 10px;
}
.quick button {
  display: flex;
  align-items: center;
}
.quick .with-caret {
  gap: 4px;
  margin-right: -1px;
}
.quick .more {
  border-top: 1px solid #4c5366;
  padding-top: 2px;
  margin-left: 2px;
}
.menubar {
  display: flex;
  height: 22px;
  flex: none;
  padding-top: 3px;
  border-bottom: 1px solid #ededed;
}
.menubar button {
  padding: 0 13px;
  height: 19px;
}
.menubar .active {
  background: #1890ff;
  color: #fff;
  border-radius: 10px;
}
.user {
  display: flex;
  align-items: center;
  margin-left: auto;
  width: 125px;
  height: 18px;
  overflow: hidden;
}
.user > * {
  flex: none;
}
.avatar {
  width: 16px;
  height: 16px;
}
.headset {
  margin-left: 17px;
}
.help {
  display: flex;
  align-items: center;
  gap: 2px;
  margin: 0 9px 0 8px;
  font-size: 14px;
}
.shirt {
  margin-right: 4px;
}
.user input {
  width: 60px;
  height: 18px;
  border: 1px solid #c9c9c9;
  border-radius: 3px;
  padding-left: 2px;
}

/* ribbon */
.ribbon {
  display: flex;
  flex: none;
  padding: 2px 0 4px;
  height: 102px;
  border-bottom: 1px solid #d5d5d5;
}
.group {
  display: flex;
  flex-direction: column;
  flex: none;
  border-right: 1px solid #dcdcdc;
}
.cols {
  display: grid;
  height: 76px;
}
.col {
  display: flex;
  flex-direction: column;
  align-items: flex-start;
  gap: 4px;
  padding-top: 2px;
}
.tool {
  display: flex;
  align-items: center;
  gap: 3px;
  height: 19px;
  padding: 0 2px;
}
.tool .caret {
  margin-left: 3px;
}
.tool.hover {
  background: #e5f1ff;
  border-radius: 3px;
  padding-right: 13px;
}
.off {
  color: #b0b0b0;
}
.off .caret {
  border-top-color: #b8b8b8;
}
.check {
  padding: 0 1px;
}
.bigtool {
  display: flex;
  flex-direction: column;
  align-items: center;
  gap: 6px;
  padding-top: 4px;
}
.bigtool svg {
  width: 30px;
  height: 30px;
}
.caption {
  display: flex;
  align-items: center;
  justify-content: center;
  gap: 5px;
  height: 20px;
}
.g-select { width: 93px; }
.g-select .cols { padding-left: 3px; }
.g-select .caption { justify-content: flex-start; padding-left: 3px; }
.g-sheet { width: 274px; }
.g-sheet .cols { grid-template-columns: 86px 84px 1fr; padding-left: 6px; }
.g-common { width: 219px; }
.g-common .cols { grid-template-columns: 134px 1fr; padding-left: 7px; }
.g-edit { width: 76px; }
.g-edit .cols { grid-template-columns: 32px 1fr; padding-left: 11px; }
.g-draw { width: 144px; }
.g-draw .cols { grid-template-columns: 32px 1fr; gap: 7px; padding-left: 12px; }
.g-detect { width: 243px; }
.g-detect .cols { grid-template-columns: 50px 50px 1fr; gap: 10px; padding-left: 11px; }
.g-detect .cols .col { margin-left: -4px; }
.g-table { width: 78px; }
.g-table .cols { padding-right: 6px; }
.g-check { width: 219px; }
.g-check .cols { grid-template-columns: 87px 1fr; padding-left: 6px; }
.g-pipe { width: 205px; }
.g-pipe .cols { grid-template-columns: 96px 1fr; padding-left: 6px; }

/* filter bar */
.filterbar {
  display: flex;
  align-items: center;
  gap: 6px;
  height: 26px;
  flex: none;
  background: #f1f1f1;
}
.filterbar select {
  appearance: none;
  width: 99px;
  height: 23px;
  padding: 0 12px 0 3px;
  color: #999;
  border: 1px solid #d9d9d9;
  border-radius: 3px;
  background: #fff url("data:image/svg+xml,%3Csvg xmlns='http://www.w3.org/2000/svg' viewBox='0 0 5 4'%3E%3Cpath d='M0 0h5L2.500 4z' fill='%23444'/%3E%3C/svg%3E") right 4px center / 5px 4px no-repeat;
}
.filterbar .cut {
  width: 51px;
  border-left: none;
  border-radius: 0 3px 3px 0;
}
.filterbar .strong {
  color: #262626;
}
.notice {
  display: flex;
  align-items: center;
  gap: 4px;
  margin-left: auto;
  padding-right: 2px;
  color: #7a7a7a;
  text-decoration: none;
}
.notice svg {
  width: 12px;
  height: 14px;
}
.notice span + span {
  margin-left: 2px;
}

/* workspace */
.workspace {
  flex: 1;
  min-height: 0;
  display: grid;
  grid-template-columns: 13px 404px 4px minmax(0, 1fr) 4px 208px;
}
.dock-head {
  display: flex;
  align-items: center;
  justify-content: flex-end;
  flex: none;
  height: 12px;
  background: #e7e7e7;
  border: 1px solid #dadada;
}
.close {
  font-size: 9px;
  line-height: 10px;
  color: #999;
  padding-right: 3px;
}
.dock-title {
  flex: none;
  height: 22px;
  padding-left: 8px;
  line-height: 22px;
  background: #f1f1f1;
  border-bottom: 1px solid #dadada;
  color: #7a7a7a;
}
.strip {
  border-right: 1px solid #d5d5d5;
  overflow: hidden;
}
.strip .dock-head {
  border-width: 1px 0;
}
.strip-title {
  height: 22px;
  background: #f1f1f1;
  border-bottom: 1px solid #dadada;
}
.strip-tools {
  height: 28px;
  border-bottom: 1px solid #dadada;
  margin-bottom: 4px;
}
.tile {
  height: 25px;
  margin-bottom: 3px;
  background: #ececec;
}
.tile.current {
  background: #d3e6fd;
  margin: 59px 0 143px;
}
.tile.text {
  display: flex;
  align-items: center;
  justify-content: flex-end;
  padding-right: 10px;
}
.left {
  display: flex;
  flex-direction: column;
  padding-left: 4px;
  min-height: 0;
}
.panel {
  border: 1px solid #d5d5d5;
  border-top: none;
}
.panel .dock-head {
  border-width: 1px 0;
}
.dock-tabs {
  display: flex;
  height: 23px;
  background: #f1f1f1;
  border-bottom: 1px solid #dadada;
}
.dock-tabs button {
  padding: 1px 8px 0;
  background: #dfdfdf;
  color: #808080;
  border-right: 1px solid #c6c6c6;
}
.dock-tabs .active {
  background: #f1f1f1;
  color: #1a1a1a;
  font-weight: 600;
}
.toolbar {
  display: flex;
  align-items: center;
  gap: 7px;
  height: 27px;
  padding: 2px 0 0 3px;
  border-bottom: 1px solid #dadada;
}
.toolbar button {
  display: flex;
  align-items: center;
  gap: 5px;
}
.toolbar .caret {
  margin: 0 1px;
}
.search {
  display: flex;
  align-items: center;
  height: 20px;
  padding: 1px 7px 0 2px;
  border-bottom: 1px solid #dadada;
}
.search input {
  flex: 1;
  outline: none;
}
.search svg {
  width: 12px;
  height: 12px;
  fill: none;
  stroke: #8c8c8c;
}
.tree-body {
  position: relative;
  height: 194px;
  padding-top: 3px;
  overflow: hidden;
}
.node {
  display: flex;
  align-items: center;
  gap: 3px;
  height: 24px;
  padding-left: 32px;
}
.node .caret {
  border-width: 4px;
  border-bottom: 0;
}
.tree li {
  height: 21px;
  margin: 1px 14px 3px 60px;
  padding-left: 4px;
  line-height: 21px;
  overflow: hidden;
}
.tree .used span {
  color: #3b7ded;
}
.tree .current {
  background: #c2d8f2;
  border-radius: 2px;
}
.vscroll {
  position: absolute;
  right: 3px;
  top: 35px;
  width: 8px;
  height: 145px;
  background: #c9c9c9;
  border-radius: 4px;
}
.hscroll {
  display: flex;
  align-items: center;
  height: 14px;
  padding: 0 19px 0 5px;
}
.hscroll .thumb {
  width: 323px;
  height: 8px;
  margin: 0 auto 0 5px;
  border-radius: 4px;
  background: #c9c9c9;
}
.props {
  margin-top: 4px;
  padding-bottom: 20px;
}
.prop-table {
  width: 397px;
  border-collapse: collapse;
  table-layout: fixed;
}
.c-no { width: 21px; }
.c-name { width: 115px; }
.c-add { width: 41px; }
.prop-table th, .prop-table td {
  height: 21px;
  padding: 0 0 0 3px;
  line-height: 16px;
  font-weight: normal;
  border: 1px solid #dcdcdc;
}
.prop-table tr > :first-child {
  border-left: none;
}
.prop-table thead th {
  border-top: none;
}
.prop-table td:first-child, .prop-table td:last-child {
  padding: 0;
  text-align: center;
}
.prop-table input {
  display: block;
  margin: 0 auto;
}
.prop-table .blue {
  color: #0f5cff;
}
.expand {
  width: 13px;
  height: 13px;
  margin: 0 6px 0 -1px;
  border: 1px solid #808080;
  border-radius: 2px;
  line-height: 10px;
  vertical-align: 1px;
}
.stub {
  flex: 1;
  min-height: 0;
  padding: 1px 0 0 10px;
  overflow: hidden;
}
.stub button {
  width: 80px;
  height: 20px;
  border: 1px solid #c6c6c6;
  border-radius: 4px;
}
.gutter {
  padding-top: 254px;
}
.grip {
  display: flex;
  align-items: center;
  justify-content: center;
  width: 4px;
  height: 100px;
  background: #5f6b7a;
}
.gutter .arrow-l { border-right-color: #d5d5d5; }
.gutter .arrow-r { border-left-color: #d5d5d5; }

/* drawing area */
.center {
  display: flex;
  flex-direction: column;
  min-height: 0;
}
.viewport {
  position: relative;
  flex: 1;
  min-height: 0;
  background: #2d2d2d;
}
.drawing {
  display: block;
  position: absolute;
  width: 100%;
  height: 100%;
  fill: none;
}
.plan path {
  vector-effect: non-scaling-stroke;
}
.wall { stroke: #232323; }
.fixture { stroke: #222; }
.lite { stroke: #555; }
.red { stroke: #3f1420; }
.cyan { stroke: #004a4a; }
.navy { stroke: #000078; }
.dgreen { stroke: #00301c; }
.green { stroke: #004d00; }
.mag { stroke: #4f004f; }
.teal { stroke: #12343c; }
.plan-text {
  fill: #565656;
  font-family: "Liberation Sans", "Noto Sans CJK SC", sans-serif;
  font-size: 14px;
}
.plan-text .tiny {
  font-size: 8px;
  fill: #5e5e5e;
}
.pipe-text {
  fill: #c4651a;
  font-size: 5px;
}
.branch-o {
  stroke: #66661a;
  stroke-width: 9;
  stroke-linecap: round;
  stroke-linejoin: round;
}
.branch-i {
  stroke: #9dad00;
  stroke-width: 5;
}
.orbit {
  stroke: #b4b4b4;
}
.axis {
  font-family: "Liberation Sans", sans-serif;
  font-size: 14px;
}
.viewtools {
  position: absolute;
  right: 0;
  top: 0;
  width: 33px;
  height: 226px;
  padding: 12px 3px 0 0;
  display: flex;
  flex-direction: column;
  align-items: center;
  gap: 9px;
  background: #fff;
  border: 1px solid #d5d5d5;
  border-radius: 2px;
}
.viewtools button {
  position: relative;
  display: flex;
  flex-direction: column;
  align-items: center;
  gap: 8px;
}
.viewtools svg {
  width: 20px;
  height: 20px;
}
.two-d span {
  position: absolute;
  left: 3px;
  bottom: 0;
  font-size: 8px;
  font-weight: bold;
  line-height: 12px;
  color: #1a73e8;
}
.viewtools .caret {
  margin-bottom: -2px;
}
.viewtools hr {
  width: 23px;
  margin: -3px 0;
  border: none;
  border-top: 1px solid #4c5366;
}
.hgutter {
  display: flex;
  justify-content: center;
  height: 4px;
  flex: none;
}
.hgutter .grip {
  width: 100px;
  height: 4px;
}
.hgutter .caret {
  border-top-color: #d5d5d5;
}

/* quantity table */
.detail {
  display: flex;
  flex-direction: column;
  flex: none;
}
.tabs {
  display: flex;
  align-items: flex-end;
  gap: 3px;
  padding-left: 4px;
}
.tabs button {
  height: 21px;
  padding: 0 6px;
  background: #dedede;
  color: #4d4d4d;
  border-radius: 3px 3px 0 0;
}
.tabs .active {
  height: 24px;
  margin-bottom: -1px;
  background: #fff;
  color: #1a73e8;
  border: 1px solid #c3c7cc;
  border-bottom: none;
  z-index: 1;
}
.detail .tabs {
  margin-top: 25px;
  padding-left: 5px;
}
.tabpage {
  position: relative;
  margin: 0 2px 2px;
  padding: 9px;
  border: 1px solid #c3c7cc;
}
.sheet {
  height: 106px;
  border: 1px solid #dcdcdc;
}
.qty {
  width: 587px;
  margin-top: -1px;
  margin-left: -1px;
  border-collapse: collapse;
  table-layout: fixed;
  text-align: center;
}
.q1 { width: 20px; }
.q2 { width: 79px; }
.q3 { width: 59px; }
.q4 { width: 97px; }
.q5 { width: 42px; }
.q6 { width: 99px; }
.q7 { width: 92px; }
.q8 { width: 99px; }
.qty th, .qty td {
  height: 21px;
  padding: 0;
  font-weight: normal;
  border: 1px solid #dcdcdc;
}
.qty .sel {
  background: #80baff;
  border-color: #6aaaf5;
  color: #fff;
  font-weight: 600;
}
.qty .num {
  text-align: left;
  padding-left: 4px;
}
.qty .focus {
  border: 2px solid #808080;
}
.num div {
  display: flex;
  align-items: center;
  justify-content: space-between;
  padding-right: 3px;
}
.num button {
  width: 18px;
  height: 15px;
  border: 1px solid #4a9be8;
  border-radius: 2px;
  color: #1a73e8;
  line-height: 11px;
  font-weight: bold;
}
.star {
  position: absolute;
  right: 41px;
  top: 24px;
  width: 40px;
  height: 40px;
  border-radius: 50%;
  background: #1a73e8;
}
.star svg {
  display: block;
  fill: #fff;
  stroke: #fff;
  stroke-width: 3;
  stroke-linejoin: round;
}

/* display settings */
.display {
  display: flex;
  flex-direction: column;
  min-height: 0;
  overflow: hidden;
  border-left: 1px solid #c3c7cc;
}
.display .tabs {
  margin-top: 3px;
  padding-left: 2px;
}
.radios {
  display: flex;
  flex: none;
  align-items: center;
  gap: 21px;
  height: 31px;
  padding-left: 7px;
  border-top: 1px solid #c3c7cc;
  border-bottom: 1px solid #c3c7cc;
  color: #000;
}
.display label {
  display: flex;
  align-items: center;
  gap: 7px;
}
.floors {
  flex: 1;
  min-height: 0;
  padding-top: 3px;
  border-left: 1px solid #c3c7cc;
  border-bottom: 1px solid #c3c7cc;
}
.root {
  display: flex;
  align-items: center;
  gap: 7px;
  height: 24px;
  padding-left: 9px;
}
.root .caret {
  border-width: 4px;
  border-bottom: 0;
}
.floors li {
  display: flex;
  align-items: center;
  height: 24px;
  padding-left: 44px;
}
.display .others {
  flex: none;
  align-items: flex-start;
  gap: 4px;
  height: 27px;
  margin-bottom: -8px;
  padding: 12px 0 0 1px;
}
```
